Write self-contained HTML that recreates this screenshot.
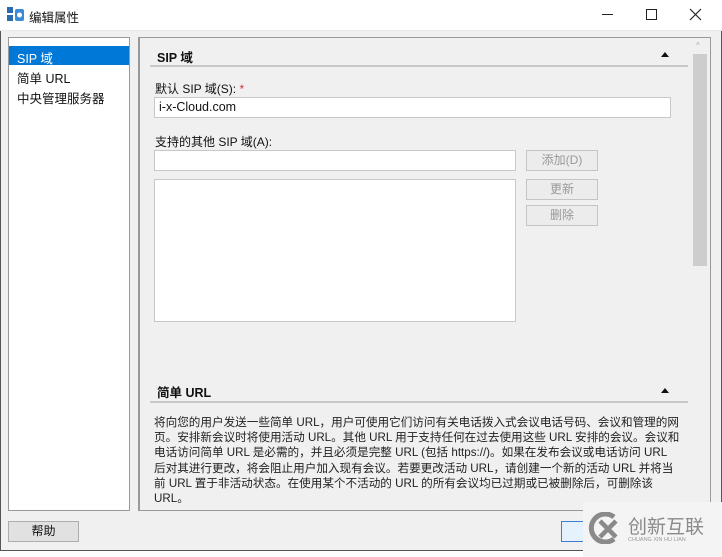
<!DOCTYPE html>
<html><head><meta charset="utf-8"><style>
*{margin:0;padding:0;box-sizing:border-box}
body{width:722px;height:557px;background:#fff;font-family:"Liberation Sans","Noto Sans CJK SC",sans-serif;font-size:12px;color:#111;position:relative;overflow:hidden}
.a{position:absolute}
.win{left:0;top:0;width:722px;height:551px;background:#f0f0f0;border:1px solid #555;border-top:none}
.title{left:0;top:0;width:722px;height:30px;background:#fff}
.inp{background:#fff;border:1px solid #c8c8c8}
.btn{background:#ececec;border:1px solid #c4c4c4;color:#999;text-align:center;line-height:19px;font-size:12px}
.hd{font-weight:bold;font-size:12.5px}
.line{height:2px;background:#c8c8c8}
.t{font-size:11.6px;line-height:15.2px;color:#222;white-space:nowrap}
</style></head><body>
<div class="a win"></div>
<div class="a title"></div>
<svg class="a" style="left:7px;top:6px" width="18" height="16"><rect x="0" y="1" width="6" height="6" fill="#2a6ab0"/><rect x="0" y="9" width="6" height="6" fill="#2a6ab0"/><rect x="8" y="3" width="9" height="12" rx="2" fill="#3a8ad8"/><circle cx="12.5" cy="9" r="2.5" fill="#fff"/></svg>
<div class="a" style="left:29px;top:7px;font-size:12.5px">编辑属性</div>
<div class="a" style="left:602px;top:14px;width:11px;height:1px;background:#222"></div>
<div class="a" style="left:646px;top:9px;width:11px;height:11px;border:1px solid #222"></div>
<svg class="a" style="left:689px;top:8px" width="13" height="13"><path d="M1 1L12 12M12 1L1 12" stroke="#222" stroke-width="1.2"/></svg>
<div class="a" style="left:0;top:30px;width:722px;height:1px;background:#e8e8e8"></div>

<div class="a" style="left:8px;top:37px;width:122px;height:474px;background:#fff;border:1px solid #999"></div>
<div class="a" style="left:9px;top:46px;width:120px;height:19px;background:#0078d7;color:#fff;padding:2px 0 0 8px;font-size:12.5px">SIP 域</div>
<div class="a" style="left:17px;top:68px;font-size:12.5px">简单 URL</div>
<div class="a" style="left:17px;top:88px;font-size:12.5px">中央管理服务器</div>

<div class="a" style="left:138px;top:37px;width:573px;height:474px;border:1px solid #999;border-left:2px solid #999"></div>
<div class="a" style="left:692px;top:40px;width:16px;height:469px;background:#f0f0f0"></div>
<div class="a" style="left:693px;top:54px;width:14px;height:212px;background:#cdcdcd"></div>
<div class="a" style="left:696px;top:41px;font-size:8px;color:#aaa">^</div>

<div class="a hd" style="left:157px;top:47px">SIP 域</div>
<div class="a" style="left:661px;top:52px;border-left:4px solid transparent;border-right:4px solid transparent;border-bottom:5px solid #111"></div>
<div class="a line" style="left:150px;top:65px;width:538px"></div>
<div class="a" style="left:155px;top:80px">默认 SIP 域(S): <span style="color:#d33">*</span></div>
<div class="a inp" style="left:154px;top:97px;width:517px;height:21px;padding:2px 4px;font-size:12.5px">i-x-Cloud.com</div>
<div class="a" style="left:155px;top:133px">支持的其他 SIP 域(A):</div>
<div class="a inp" style="left:154px;top:150px;width:362px;height:21px"></div>
<div class="a inp" style="left:154px;top:179px;width:362px;height:143px"></div>
<div class="a btn" style="left:526px;top:150px;width:72px;height:21px">添加(D)</div>
<div class="a btn" style="left:526px;top:179px;width:72px;height:21px">更新</div>
<div class="a btn" style="left:526px;top:205px;width:72px;height:21px">删除</div>

<div class="a hd" style="left:157px;top:382px">简单 URL</div>
<div class="a" style="left:661px;top:388px;border-left:4px solid transparent;border-right:4px solid transparent;border-bottom:5px solid #111"></div>
<div class="a line" style="left:150px;top:401px;width:538px"></div>
<div class="a t" style="left:154px;top:415px">将向您的用户发送一些简单 URL，用户可使用它们访问有关电话拨入式会议电话号码、会议和管理的网<br>页。安排新会议时将使用活动 URL。其他 URL 用于支持任何在过去使用这些 URL 安排的会议。会议和<br>电话访问简单 URL 是必需的，并且必须是完整 URL (包括 https://)。如果在发布会议或电话访问 URL<br>后对其进行更改，将会阻止用户加入现有会议。若要更改活动 URL，请创建一个新的活动 URL 并将当<br>前 URL 置于非活动状态。在使用某个不活动的 URL 的所有会议均已过期或已被删除后，可删除该<br>URL。</div>

<div class="a" style="left:8px;top:521px;width:71px;height:21px;background:#e1e1e1;border:1px solid #adadad;text-align:center;line-height:19px">帮助</div>
<div class="a" style="left:561px;top:521px;width:30px;height:21px;border:1px solid #3c7fd0;background:#e5f1fb"></div>

<div class="a" style="left:583px;top:502px;width:139px;height:55px;background:#f4f4f4"></div>
<svg class="a" style="left:588px;top:512px" width="36" height="32"><path d="M26 5A14 14 0 1 0 26 27" stroke="#8a8a8a" stroke-width="5" fill="none"/><path d="M12 9L28 25M28 9L12 25" stroke="#8a8a8a" stroke-width="4.5"/></svg>
<div class="a" style="left:628px;top:512px;font-size:19px;color:#8a8a8a">创新互联</div>
<div class="a" style="left:628px;top:537px;font-size:5.5px;color:#999">CHUANG XIN HU LIAN</div>
</body></html>
